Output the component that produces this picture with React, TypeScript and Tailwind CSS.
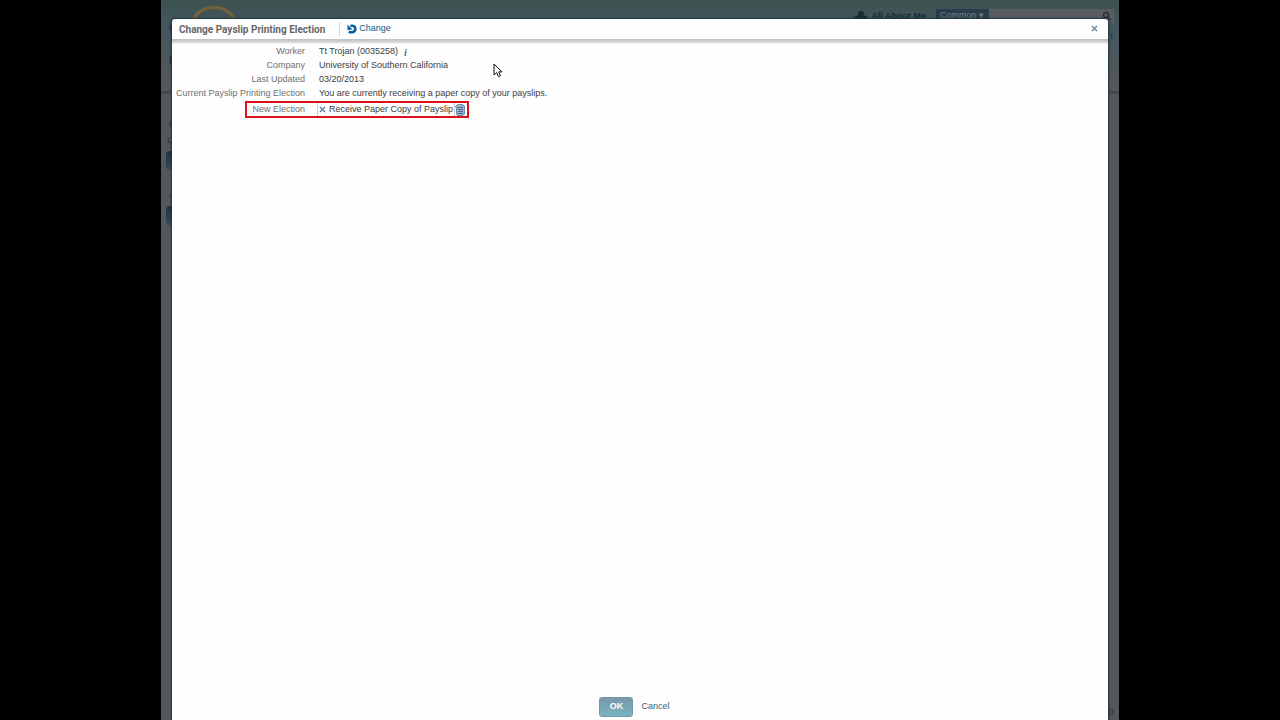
import { useState } from 'react'
import type { ReactNode } from 'react'

interface RowProps {
  label: string
  children: ReactNode
}

function CloseIcon({ className }: { className?: string }) {
  return (
    <svg viewBox="0 0 8 8" className={className} fill="none" stroke="currentColor" strokeWidth="1.6">
      <path d="M1 1l6 6M7 1L1 7" />
    </svg>
  )
}

function ChangeIcon() {
  return (
    <svg viewBox="0 0 10 10" className="h-[10px] w-[10px]" fill="none">
      <path d="M3.500 2C6.500 1 8.300 2.800 8.300 5C8.300 7.800 5 9.200 1.800 7.600" stroke="#0b5c9a" strokeWidth="2.600" />
      <path d="M0.500 0.500v5.500l5-0.500z" fill="#0b5c9a" />
    </svg>
  )
}

function PromptIcon() {
  return (
    <svg viewBox="0 0 10 12" className="h-3 w-[10px]">
      <path d="M0.500 2.500l2-2h5l2 1.500v8l-1.500 1.500h-5.500l-1-1.500V4z" fill="#9bb3c8" stroke="#54799a" strokeWidth="0.800" />
      <path d="M2.500 3.500h5.500M3 5.500h5M3 7.500h5M3 9.500h5" stroke="#3f6788" strokeWidth="0.900" />
    </svg>
  )
}

function MouseCursor() {
  return (
    <svg viewBox="0 0 10 15" className="absolute top-[63px] left-[332px] h-[15px] w-[10px]">
      <path
        d="M1 1v11l2.600-2.400L5.400 13.600l2-0.900L5.700 8.900H9z"
        fill="#fff"
        stroke="#111"
        strokeWidth="1"
      />
    </svg>
  )
}

function Row({ label, children }: RowProps) {
  return (
    <div className="flex h-[14px] items-center">
      <dt className="w-[133px] shrink-0 text-right text-[#707070]">{label}</dt>
      <dd className="ml-[14px] flex items-center whitespace-nowrap text-[#3c3c3c]">{children}</dd>
    </div>
  )
}

// Dimmed page that stays visible round the edges of the dialog
function PageBehind() {
  return (
    <div aria-hidden="true" className="flex min-h-screen flex-col bg-[#55585a] text-[9px]">
      <div className="flex h-[91px] justify-between bg-linear-to-b from-[#3d5250] via-[#44565d] via-30% to-[#55585b]">
        <div className="flex flex-col pl-[8px]">
          <div className="flex h-[52px] items-start">
            <span className="w-[14px] pt-[20px] text-sm font-bold text-[#1c3045]">W</span>
            <svg viewBox="0 0 46 30" className="mt-1 ml-2 h-[30px] w-[46px]" fill="none">
              <path d="M2 17C8 -1 38 -1 44 17" stroke="#79623a" strokeWidth="3" />
            </svg>
          </div>
          <span className="text-[11px] font-bold text-[#1d2935]">I</span>
        </div>
        <div className="flex flex-col items-end pt-[9px]">
          <div className="flex items-center pr-[5px]">
            <svg viewBox="0 0 14 12" className="h-3 w-[14px]" fill="#172c38">
              <circle cx="7" cy="4" r="3" />
              <path d="M0 12V7l4-2h6l4 2v5z" />
            </svg>
            <span className="mr-[10px] ml-[3px] pt-px font-bold text-[#172c38]">All About Me</span>
            <span className="h-[14px] w-[53px] bg-[#293d4a] pl-1 leading-[12px] text-[#71818a]">Common ▾</span>
            <span className="flex h-[14px] w-[125px] justify-end bg-[#5b5c5e]">
              <svg viewBox="0 0 10 12" className="h-3 w-[14px]" fill="none" stroke="#26323a" strokeWidth="1.500">
                <circle cx="4" cy="6" r="2.500" />
                <path d="M6 8l3 3" />
              </svg>
            </span>
          </div>
          <span className="pt-[6px] pr-[6px] text-[#1c3447]">t</span>
        </div>
      </div>
      <div className="h-[3px] bg-[#45484a]" />
      <div className="flex flex-1 flex-col justify-between">
        <div className="flex flex-col pl-[5px]">
          <span className="mt-[23px] pl-[3px] leading-[14px] text-[#22282c]">C</span>
          <span className="mt-[2px] pl-[1px] leading-[14px] text-[#22282c]">U</span>
          <span className="mt-[4px] h-[19px] w-[60px] rounded-sm bg-linear-to-b from-[#22323d] to-[#304b5b]" />
          <span className="mt-[20px] pl-[3px] leading-[14px] text-[#182b38]">V</span>
          <span className="mt-[2px] h-[19px] w-[60px] rounded-sm bg-linear-to-b from-[#22323d] to-[#304b5b]" />
        </div>
        <span className="pr-[5px] pb-[2px] text-right leading-3 text-[#24292c]">00</span>
      </div>
    </div>
  )
}

export default function App() {
  const [election, setElection] = useState('Receive Paper Copy of Payslip')

  return (
    <div className="min-h-screen bg-black px-[161px] font-['Liberation_Sans',Arial,sans-serif]">
      <div className="relative">
        <PageBehind />

        <div
          role="dialog"
          aria-labelledby="dialog-title"
          className="absolute inset-x-[11px] top-[19px] bottom-0 flex flex-col rounded-t-[3px] bg-[#fefefe] text-[9px] shadow-[0_0_2px_1px_#20343c]"
        >
          <header className="flex h-[20px] items-center pl-[7px]">
            <h1
              id="dialog-title"
              className="font-[Roboto,Arial,sans-serif] text-[10px] font-bold whitespace-nowrap text-[#666]"
            >
              Change Payslip Printing Election
            </h1>
            <a href="#change" className="ml-[14px] flex h-[14px] items-center gap-[2px] border-l border-[#d5d5d5] pl-[7px] text-[#0b5c8f]">
              <ChangeIcon />
              Change
            </a>
            <button type="button" aria-label="Close" className="mt-[3px] mr-[9px] ml-auto flex h-3 w-[9px] items-center justify-center self-start text-[#5f7f98]">
              <CloseIcon className="h-[7px] w-[7px]" />
            </button>
          </header>
          <div className="h-[5px] bg-linear-to-b from-[#bfc1c4] via-[#cdcfd1] via-50% to-[#f8f8f8]" />

          <form className="flex flex-1 flex-col justify-between" onSubmit={e => e.preventDefault()}>
            <dl className="pt-px">
              <Row label="Worker">
                Tt Trojan (0035258)
                <span className="ml-[6px] font-['Liberation_Serif',serif] text-[10px] font-bold text-[#3d7291] italic">i</span>
              </Row>
              <Row label="Company">University of Southern California</Row>
              <Row label="Last Updated">03/20/2013</Row>
              <Row label="Current Payslip Printing Election">
                You are currently receiving a paper copy of your payslips.
              </Row>
              <div className="relative flex h-[17px] w-[297px] items-center">
                <dt className="w-[133px] text-right text-[#707070]">
                  <label htmlFor="election">New Election</label>
                </dt>
                <dd className="ml-3 flex items-center">
                  <span className="flex h-[13px] w-[138px] items-center border-x border-[#c4c9cd]">
                    <button
                      type="button"
                      aria-label="Clear election"
                      onClick={() => setElection('')}
                      className="ml-px flex w-[7px] shrink-0 justify-center text-[#4d7796]"
                    >
                      <CloseIcon className="h-[7px] w-[7px]" />
                    </button>
                    <input
                      id="election"
                      value={election}
                      onChange={e => setElection(e.target.value)}
                      className="ml-[3px] w-full min-w-0 text-[#3c3c3c] outline-none"
                    />
                  </span>
                  <button type="button" aria-label="Choose election">
                    <PromptIcon />
                  </button>
                </dd>
                {/* highlight frame */}
                <span className="pointer-events-none absolute inset-y-0 right-0 left-[73px] border-2 border-[#d9121b]" />
              </div>
            </dl>

            <footer className="flex items-center justify-center gap-2 pr-[11px] pb-[3px]">
              <button
                type="submit"
                className="h-5 w-[34px] rounded-[3px] border border-[#6f97a8] bg-linear-to-b from-[#7798ab] to-[#79b3bf] font-bold text-white"
              >
                OK
              </button>
              <button type="button" className="text-[#2d6480]">Cancel</button>
            </footer>
          </form>
        </div>

        <MouseCursor />
      </div>
    </div>
  )
}
